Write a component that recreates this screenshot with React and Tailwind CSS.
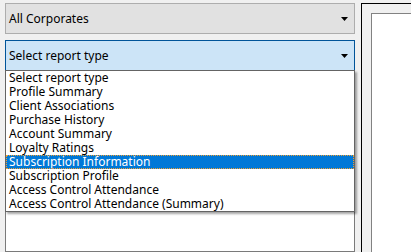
const items = [
  'Select report type',
  'Profile Summary',
  'Client Associations',
  'Purchase History',
  'Account Summary',
  'Loyalty Ratings',
  'Subscription Information',
  'Subscription Profile',
  'Access Control Attendance',
  'Access Control Attendance (Summary)',
]

function Arrow() {
  return (
    <svg width="7" height="4" viewBox="0 0 7 4" className="shrink-0">
      <path d="M0 0h7L3.5 4z" fill="#000" />
    </svg>
  )
}

export default function App() {
  const selected = 'Subscription Information'

  return (
    <div className="w-[411px] h-[252px] bg-[#f0f0f0] flex overflow-hidden text-[12px] text-black font-['Noto_Sans',sans-serif]">
      <div className="relative ml-[5px] w-[350px] pt-[3px] flex flex-col">
        <div className="h-[31px] border border-[#adadad] bg-[#e1e1e1] flex items-center justify-between pl-[3px] pr-[6px]">
          <span>All Corporates</span>
          <Arrow />
        </div>
        <div className="mt-[6px] h-[30px] border border-[#005499] border-b-0 bg-[#cce4f7] flex items-center justify-between pl-[3px] pr-[6px]">
          <span>Select report type</span>
          <Arrow />
        </div>
        <div className="mt-[6px] flex-1 border border-[#7a7a7a] bg-white" />

        <div className="absolute top-[70px] left-0 w-[350px] border border-[#646464] bg-white shadow-[2px_2px_2px_rgba(0,0,0,0.35)]">
          {items.map(item => (
            <div
              key={item}
              className={`h-[14px] leading-[14px] pl-[3px] whitespace-nowrap ${item === selected ? 'bg-[#0078d7] text-white outline outline-1 outline-dotted outline-[#f0a030] -outline-offset-1' : ''}`}
            >
              {item}
            </div>
          ))}
        </div>
      </div>

      <div className="ml-[6px] mt-[3px] flex-1 border-l border-t border-black bg-[#f0f0f0] pl-[9px] pt-[9px]">
        <div className="h-full border-l border-t border-[#828282] bg-white" />
      </div>
    </div>
  )
}
